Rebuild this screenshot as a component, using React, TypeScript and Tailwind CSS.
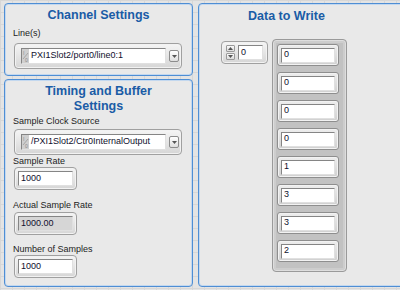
import React from "react";

const font = "font-['Liberation_Sans',Arial,sans-serif]";

function Panel({ className, children }: { className: string; children: React.ReactNode }) {
  return (
    <section
      className={`rounded-[4px] border border-[#4f8ed4] bg-[#e9e9e9] shadow-[inset_0_0_0_1px_#c3d8ef] ${className}`}
    >
      {children}
    </section>
  );
}

function Title({ children, className = "" }: { children: React.ReactNode; className?: string }) {
  return (
    <h2 className={`text-[12.5px] font-bold leading-[15px] text-[#1a5ca6] ${className}`}>{children}</h2>
  );
}

function Label({ children, className = "" }: { children: React.ReactNode; className?: string }) {
  return <div className={`-ml-[1px] text-[9px] leading-[11px] text-[#1c1c1c] ${className}`}>{children}</div>;
}

function IOIcon() {
  return (
    <svg width="7" height="14" viewBox="0 0 7 14" className="shrink-0">
      <rect width="7" height="14" fill="#cfcfcf" />
      <text x="1" y="6" fontSize="5" fill="#8a8a8a" fontFamily="Liberation Sans, Arial, sans-serif">I</text>
      <line x1="1" y1="10" x2="6" y2="4" stroke="#9a9a9a" strokeWidth="0.8" />
      <text x="3" y="12.5" fontSize="5" fill="#8a8a8a" fontFamily="Liberation Sans, Arial, sans-serif">0</text>
    </svg>
  );
}

function DropButton() {
  return (
    <div className="ml-[3px] flex h-[12px] w-[10px] items-center justify-center rounded-[2px] border border-[#8c8c8c] bg-gradient-to-b from-[#ffffff] to-[#dedede]">
      <svg width="5" height="3" viewBox="0 0 5 3">
        <path d="M0 0h5L2.5 3z" fill="#555" />
      </svg>
    </div>
  );
}

function PathControl({ value }: { value: string }) {
  return (
    <div className="flex h-[26px] w-[168px] items-center rounded-[4px] border border-[#a0a0a0] bg-gradient-to-b from-[#f5f5f5] to-[#d6d6d6] pl-[6px] shadow-[inset_0_0_0_1px_#f2f2f2]">
      <div className="flex h-[16px] w-[145px] items-center border border-[#858585] border-b-[#e0e0e0] border-r-[#e0e0e0] bg-white">
        <IOIcon />
        <span className="pl-[2px] text-[9px] text-[#10102e]">{value}</span>
      </div>
      <DropButton />
    </div>
  );
}

function Numeric({ value, indicator = false }: { value: string; indicator?: boolean }) {
  return (
    <div className="flex h-[23px] w-[63px] items-center rounded-[4px] border border-[#a0a0a0] bg-gradient-to-b from-[#f5f5f5] to-[#d6d6d6] pl-[3px] shadow-[inset_0_0_0_1px_#f2f2f2]">
      <div
        className={`flex h-[15px] w-[55px] items-center border border-[#858585] border-b-[#e0e0e0] border-r-[#e0e0e0] pl-[2px] text-[9px] text-[#10102e] ${
          indicator ? "bg-[#d6d6d6]" : "bg-white"
        }`}
      >
        {value}
      </div>
    </div>
  );
}

function Arrow({ up }: { up: boolean }) {
  return (
    <div className="flex h-[7px] w-[9px] items-center justify-center rounded-[1px] border border-[#9a9a9a] bg-gradient-to-b from-[#fafafa] to-[#dcdcdc]">
      <svg width="5" height="3" viewBox="0 0 5 3">
        <path d={up ? "M0 3h5L2.5 0z" : "M0 0h5L2.5 3z"} fill="#555" />
      </svg>
    </div>
  );
}

function IndexControl() {
  return (
    <div className="mt-[1px] flex h-[23px] w-[47px] items-center rounded-[4px] border border-[#a0a0a0] bg-gradient-to-b from-[#f5f5f5] to-[#d6d6d6] pl-[4px] shadow-[inset_0_0_0_1px_#f2f2f2]">
      <div className="flex flex-col gap-[1px]">
        <Arrow up />
        <Arrow up={false} />
      </div>
      <div className="ml-[3px] flex h-[15px] w-[25px] items-center border border-[#858585] border-b-[#e0e0e0] border-r-[#e0e0e0] bg-white pl-[2px] text-[9px] text-[#10102e]">
        0
      </div>
    </div>
  );
}

function ArrayElement({ value }: { value: number }) {
  return (
    <div className="flex h-[22px] w-[62px] items-center rounded-[3px] border border-[#8e8e8e] bg-gradient-to-b from-[#eeeeee] to-[#d0d0d0] pl-[3px] shadow-[inset_0_0_0_1px_#f2f2f2]">
      <div className="flex h-[15px] w-[54px] items-center border border-[#858585] border-b-[#e0e0e0] border-r-[#e0e0e0] bg-white pl-[2px] text-[9px] text-[#10102e]">
        {value}
      </div>
    </div>
  );
}

const data = [0, 0, 0, 0, 1, 3, 3, 2];

export default function App() {
  return (
    <div
      className={`${font} flex h-[290px] w-[400px] overflow-hidden bg-[#e4e4e4] bg-[linear-gradient(#d7d7d7_1px,transparent_1px),linear-gradient(90deg,#d7d7d7_1px,transparent_1px)] bg-[size:12px_12px] pl-[4px] pt-[3px]`}
    >
      <div className="flex w-[189px] shrink-0 flex-col gap-[3px]">
        <Panel className="h-[73px] px-[9px]">
          <Title className="mt-[4px] text-center">Channel Settings</Title>
          <Label className="mt-[5px]">Line(s)</Label>
          <div className="mt-[4px]">
            <PathControl value="PXI1Slot2/port0/line0:1" />
          </div>
        </Panel>
        <Panel className="h-[208px] px-[9px]">
          <Title className="mt-[4px] text-center">
            Timing and Buffer
            <br />
            Settings
          </Title>
          <Label className="mt-[2px]">Sample Clock Source</Label>
          <div className="mt-[2px]">
            <PathControl value="/PXI1Slot2/Ctr0InternalOutput" />
          </div>
          <Label className="mt-[1px]">Sample Rate</Label>
          <Numeric value="1000" />
          <Label className="mt-[10px]">Actual Sample Rate</Label>
          <div className="mt-[1px]">
            <Numeric value="1000.00" indicator />
          </div>
          <Label className="mt-[9px]">Number of Samples</Label>
          <Numeric value="1000" />
        </Panel>
      </div>
      <Panel className="ml-[5px] h-[284px] w-[212px] shrink-0">
        <Title className="mt-[5px] pl-[49px]">Data to Write</Title>
        <div className="mt-[16px] flex items-start pl-[22px]">
          <IndexControl />
          <div className="-mt-[1px] ml-[4px] flex h-[233px] w-[75px] flex-col gap-[6px] rounded-[4px] border border-[#9a9a9a] bg-[#c2c2c2] pl-[4px] pt-[4px] shadow-[inset_0_0_0_1px_#dedede,inset_0_0_0_3px_#cdcdcd]">
            {data.map((v, i) => (
              <ArrayElement key={i} value={v} />
            ))}
          </div>
        </div>
      </Panel>
    </div>
  );
}
